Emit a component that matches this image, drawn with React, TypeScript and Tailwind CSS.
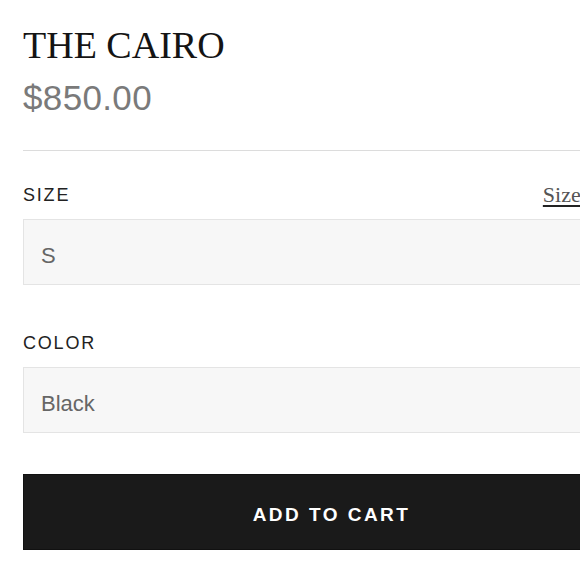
export default function App() {
  return (
    <div className="w-[580px] h-[580px] overflow-hidden bg-white">
      <div className="w-[640px] pl-[23px] pt-[22px] font-['Liberation_Sans',Arial,sans-serif]">
        {/* Title + price */}
        <h1 className="font-['Liberation_Serif',serif] text-[38px] leading-[46px] text-[#141414]">
          THE CAIRO
        </h1>
        <p className="mt-[10px] text-[35px] leading-[40px] text-[#7a7a7a] tracking-[0.01em]">$850.00</p>

        <div className="mt-[32px] border-t border-[#dcdcdc]" />

        {/* Size */}
        <div className="mt-[32px] flex items-end justify-between">
          <span className="text-[18px] leading-[24px] tracking-[0.1em] text-[#222]">SIZE</span>
          <a
            href="#"
            className="font-['Liberation_Serif',serif] text-[22px] leading-[24px] text-[#555] underline decoration-[#222] underline-offset-[3px]"
          >
            Size Guide
          </a>
        </div>
        <div className="mt-[12px] h-[66px] flex items-center pt-[7px] px-[17px] bg-[#f7f7f7] border border-[#e4e4e4] text-[22px] text-[#666]">
          S
        </div>

        {/* Color */}
        <div className="mt-[46px] text-[18px] leading-[24px] tracking-[0.1em] text-[#222]">COLOR</div>
        <div className="mt-[12px] h-[66px] flex items-center pt-[7px] px-[17px] bg-[#f7f7f7] border border-[#e4e4e4] text-[22px] text-[#666]">
          Black
        </div>

        {/* Add to cart */}
        <button className="mt-[41px] w-full h-[76px] flex items-center justify-center pt-[6px] bg-[#1a1a1a] border border-[#111] text-white text-[19px] font-bold tracking-[0.13em]">
          ADD TO CART
        </button>
      </div>
    </div>
  );
}
